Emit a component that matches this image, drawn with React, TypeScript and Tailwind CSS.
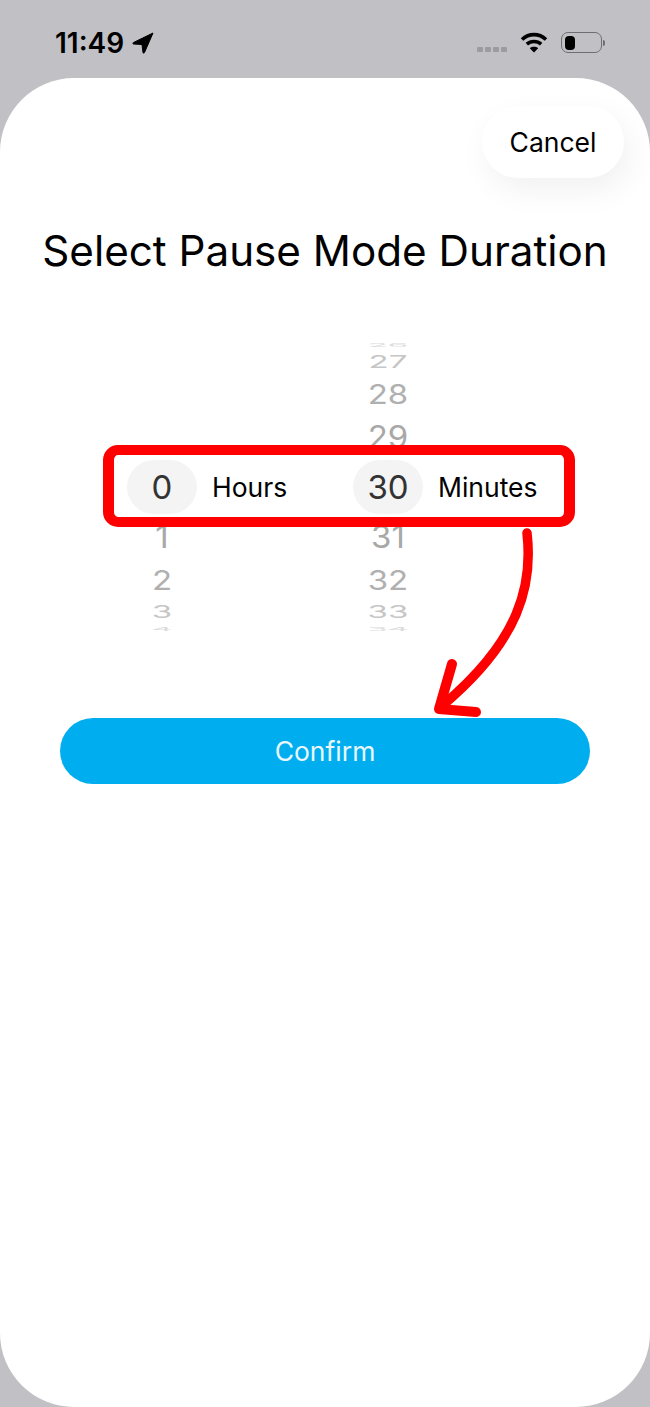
import React from 'react';

interface WheelRow {
  value: string;
  height: string;
  text: string;
}

const minuteRows: WheelRow[] = [
  { value: '26', height: 'h-[10px]', text: 'scale-y-[0.16] text-[#dcdcdc]' },
  { value: '27', height: 'h-[24px]', text: 'scale-y-[0.52] text-[#c6c6c6]' },
  { value: '28', height: 'h-[40px]', text: 'scale-y-[0.8] text-[#b0b0b0]' },
  { value: '29', height: 'h-[46px]', text: 'scale-y-[0.95] text-[#a8a8a8]' },
];

const minuteRowsBelow: WheelRow[] = [
  { value: '31', height: 'h-[46px]', text: 'scale-y-[0.95] text-[#a8a8a8]' },
  { value: '32', height: 'h-[40px]', text: 'scale-y-[0.8] text-[#b0b0b0]' },
  { value: '33', height: 'h-[24px]', text: 'scale-y-[0.52] text-[#c6c6c6]' },
  { value: '34', height: 'h-[10px]', text: 'scale-y-[0.16] text-[#dcdcdc]' },
];

const hourRowsAbove: WheelRow[] = minuteRows.map((r) => ({ ...r, value: '' }));

const hourRowsBelow: WheelRow[] = [
  { value: '1', height: 'h-[46px]', text: 'scale-y-[0.95] text-[#a8a8a8]' },
  { value: '2', height: 'h-[40px]', text: 'scale-y-[0.8] text-[#b0b0b0]' },
  { value: '3', height: 'h-[24px]', text: 'scale-y-[0.52] text-[#c6c6c6]' },
  { value: '4', height: 'h-[10px]', text: 'scale-y-[0.16] text-[#dcdcdc]' },
];

function Rows({ rows }: { rows: WheelRow[] }) {
  return (
    <>
      {rows.map((row, i) => (
        <div key={i} className={`flex items-center justify-center ${row.height}`}>
          <span className={`block text-[33px] leading-none ${row.text}`}>{row.value}</span>
        </div>
      ))}
    </>
  );
}

function Wheel({ above, value, below, label }: { above: WheelRow[]; value: string; below: WheelRow[]; label: string }) {
  return (
    <div className="flex w-[226px] items-center">
      <div className="flex w-[70px] flex-col">
        <Rows rows={above} />
        <div className="relative z-20 flex h-[54px] items-center justify-center rounded-full bg-[#f4f4f4] pt-[2px] text-[33px] text-[#333333]">
          {value}
        </div>
        <Rows rows={below} />
      </div>
      <span className="relative z-20 ml-[15px] pt-[2px] text-[26.5px] text-black">{label}</span>
    </div>
  );
}

function StatusBar() {
  return (
    <div className="flex h-[78px] shrink-0 items-start justify-between pl-[55px] pr-[45px] pt-[28px]">
      <div className="flex items-center gap-2">
        <span className="text-[28px] font-semibold leading-[30px] text-black">11:49</span>
        <svg width="22" height="22" viewBox="0 0 22 22" fill="black">
          <path d="M21 1 L1.5 10.5 Q0 11.5 1.5 12 L10 12.5 L11 20.5 Q11.5 22 12.5 20.5 Z" stroke="black" strokeWidth="1" strokeLinejoin="round" />
        </svg>
      </div>
      <div className="flex items-end gap-[13px] pt-[4px]">
        <div className="flex gap-[2px] pb-[1px]">
          <span className="h-[5px] w-[6px] rounded-[1px] bg-[#9b9ba0]" />
          <span className="h-[5px] w-[6px] rounded-[1px] bg-[#9b9ba0]" />
          <span className="h-[5px] w-[6px] rounded-[1px] bg-[#9b9ba0]" />
          <span className="h-[5px] w-[6px] rounded-[1px] bg-[#9b9ba0]" />
        </div>
        <svg width="28" height="21" viewBox="0 0 28 21" fill="none" stroke="black" strokeWidth="3.6">
          <path d="M2 7.5 C9 1 19 1 26 7.5" />
          <path d="M6.8 12.2 C11 8.5 17 8.5 21.2 12.2" />
          <path d="M14 20.5 L9.8 16.2 C12 14.4 16 14.4 18.2 16.2 Z" fill="black" stroke="none" />
        </svg>
        <div className="flex items-center">
          <div className="flex h-[21px] w-[41px] items-center rounded-[7px] border border-[#6e6e72] px-[3px]">
            <span className="h-[14px] w-[10px] rounded-[4px] bg-black" />
          </div>
          <span className="ml-[1px] h-[6px] w-[2px] rounded-r-sm bg-[#6e6e72]" />
        </div>
      </div>
    </div>
  );
}

export default function App() {
  return (
    <div className="flex h-[1407px] w-[650px] flex-col overflow-hidden bg-[#c1c0c5] font-['Inter',sans-serif]">
      <StatusBar />

      <div className="relative flex flex-1 flex-col rounded-[74px] bg-white">
        <div className="flex justify-end pr-[26px] pt-[28px]">
          <div className="flex h-[72px] w-[142px] items-center justify-center rounded-[36px] bg-white pt-[2px] text-[26.5px] text-black shadow-[6px_12px_32px_rgba(0,0,0,0.06)]">
            Cancel
          </div>
        </div>

        <h1 className="mt-[48px] h-[50px] text-center text-[42.2px] font-normal leading-[50px] text-black">
          Select Pause Mode Duration
        </h1>

        <div className="mt-[64px] flex pl-[127px]">
          <Wheel above={hourRowsAbove} value="0" below={hourRowsBelow} label="Hours" />
          <Wheel above={minuteRows} value="30" below={minuteRowsBelow} label="Minutes" />
        </div>

        <button
          type="button"
          className="mx-[60px] mt-[84px] h-[66px] rounded-[33px] bg-[#00aeef] pt-[2px] text-[26.5px] text-[#e8f7fd]"
        >
          Confirm
        </button>

        {/* red annotation box, sits over the wheel */}
        <div className="absolute left-[103px] top-[367px] z-10 h-[82px] w-[472px] rounded-[15px] border-x-[11px] border-y-[10px] border-[#fe0000] bg-white" />

        {/* red annotation arrow */}
        <svg className="absolute left-[420px] top-[445px] z-10" width="130" height="205" viewBox="420 523 130 205" fill="none">
          <path d="M527 533 C533 585 520 640 443 705" stroke="#fe0000" strokeWidth="9.5" strokeLinecap="round" />
          <path d="M452 664 L439 709 L476 712" stroke="#fe0000" strokeWidth="10" strokeLinecap="round" strokeLinejoin="round" />
        </svg>
      </div>
    </div>
  );
}
